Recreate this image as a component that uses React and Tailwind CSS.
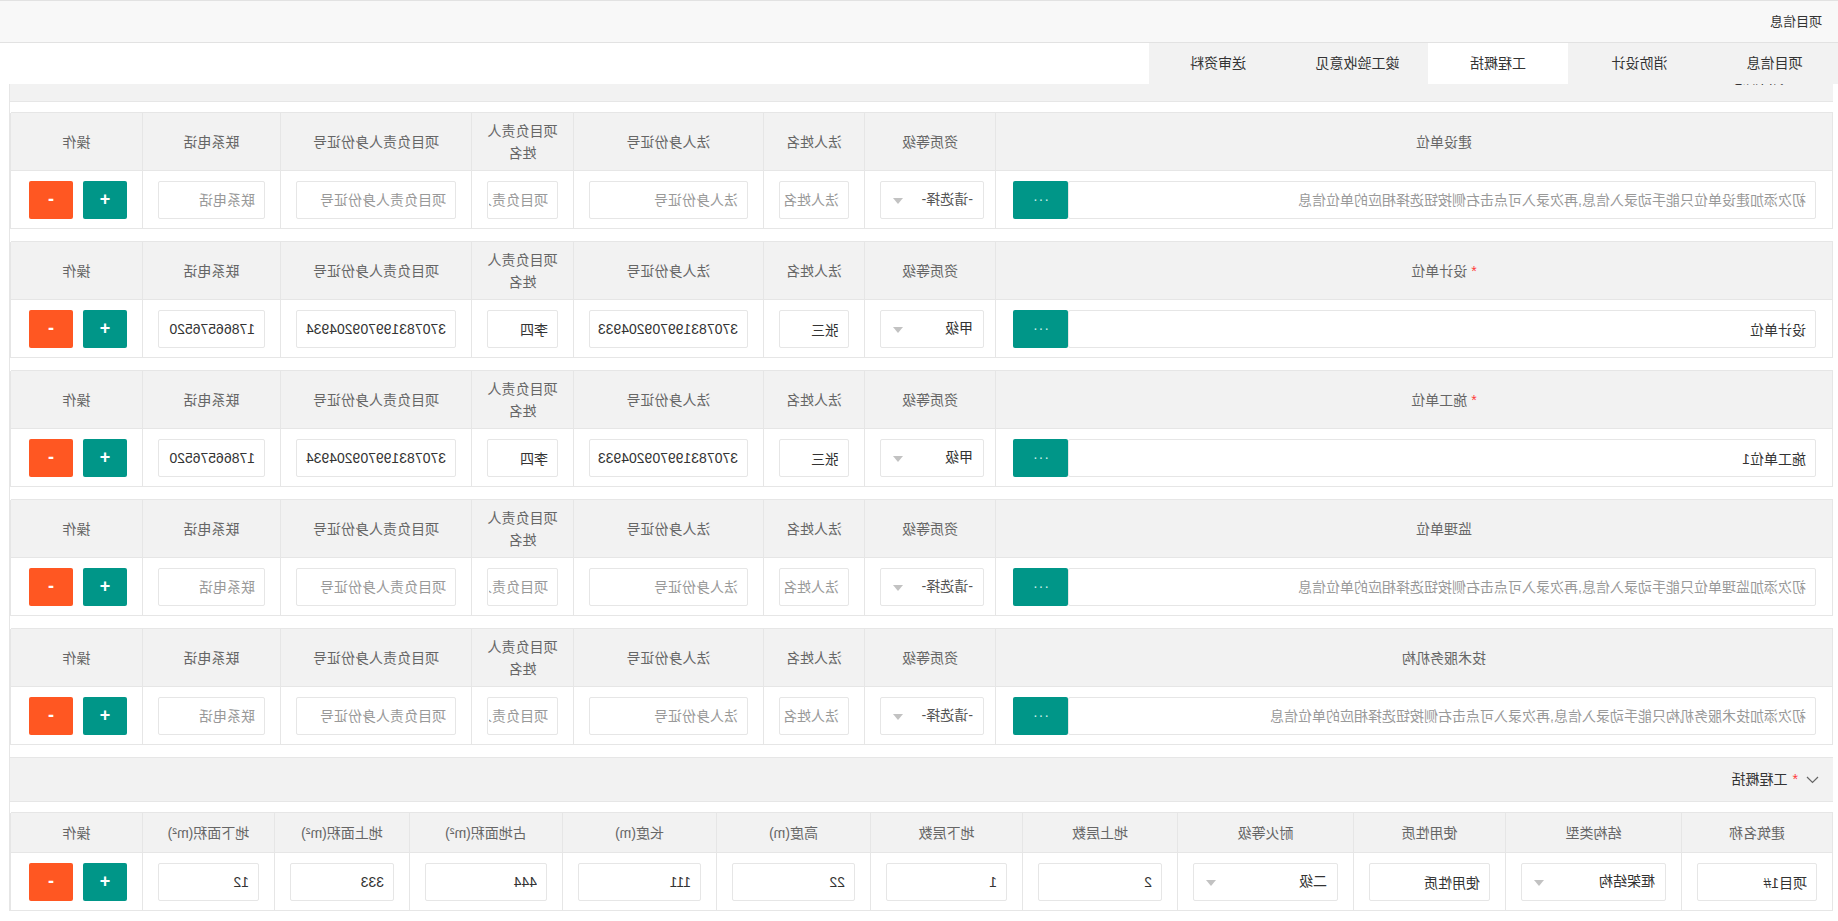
import React from "react";

const FONT = { fontFamily: '"Liberation Sans", "Noto Sans CJK SC", sans-serif' };

const tabs = [
  { name: "项目信息", w: "w-[127px]" },
  { name: "消防设计", w: "w-[143px]" },
  { name: "工程概括", w: "w-[140px]", active: true },
  { name: "竣工验收意见", w: "w-[141px]" },
  { name: "送审资料", w: "w-[138px]" },
];

const blocks = [
  { title: "建设单位", ph: "初次添加建设单位只能手动录入信息,再次录入可点击右侧按钮选择相应的单位信息" },
  {
    title: "设计单位", req: true, unit: "设计单位", grade: "甲级", name: "张三",
    id: "370783199709204933", pm: "李四", pmid: "370783199709204934", tel: "17866576520",
  },
  {
    title: "施工单位", req: true, unit: "施工单位1", grade: "甲级", name: "张三",
    id: "370783199709204933", pm: "李四", pmid: "370783199709204934", tel: "17866576520",
  },
  { title: "监理单位", ph: "初次添加监理单位只能手动录入信息,再次录入可点击右侧按钮选择相应的单位信息" },
  { title: "技术服务机构", ph: "初次添加技术服务机构只能手动录入信息,再次录入可点击右侧按钮选择相应的单位信息" },
];

const Inp = ({ value, ph }) => (
  <input
    readOnly
    defaultValue={value || ""}
    placeholder={ph}
    className="w-full min-w-0 h-[38px] border border-[#e6e6e6] rounded-[2px] bg-white pl-[9px] pr-[1px] text-[14px] text-[#333] placeholder:text-[#999] outline-none"
    style={FONT}
  />
);

const Sel = ({ value }) => (
  <div className="w-full h-[38px] border border-[#e6e6e6] rounded-[2px] bg-white flex items-center justify-between pl-[10px] pr-[12px] text-[14px]">
    <span className={value ? "text-[#333]" : "text-[#555]"}>{value || "-请选择-"}</span>
    <span className="w-0 h-0 border-t-[6px] border-x-[5px] border-t-[#c2c2c2] border-x-transparent mt-[2px]" />
  </div>
);

const Ops = () => (
  <div className="flex gap-[10px]">
    <div className="w-[44px] h-[38px] rounded-[2px] bg-[#009688] text-white flex items-center justify-center text-[18px] font-bold">+</div>
    <div className="w-[44px] h-[38px] rounded-[2px] bg-[#ff5722] text-white flex items-center justify-center text-[18px] font-bold">-</div>
  </div>
);

const th = "border-r border-b border-[#e6e6e6] bg-[#f2f2f2] flex items-center justify-center text-center text-[14px] leading-[22px] text-[#666] px-[15px]";
const td = "border-r border-b border-[#e6e6e6] bg-white flex items-center px-[15px]";

const UnitBlock = ({ b }) => (
  <div className="grid grid-cols-[837px_131px_101px_190px_102px_191px_138px_132px] border-l border-t border-[#e6e6e6] mb-[12px]">
    <div className={`${th} h-[58px] pr-[75px]`}>
      {b.req && <span className="text-[#ff3b3b] mr-[4px]">*</span>}
      {b.title}
    </div>
    <div className={th}>资质等级</div>
    <div className={th}>法人姓名</div>
    <div className={th}>法人身份证号</div>
    <div className={th}>项目负责人姓名</div>
    <div className={th}>项目负责人身份证号</div>
    <div className={th}>联系电话</div>
    <div className={th}>操作</div>

    <div className={`${td} h-[58px] pl-[16px] pr-[17px]`}>
      <Inp value={b.unit} ph={b.ph} />
      <div className="shrink-0 w-[55px] h-[38px] rounded-[2px] bg-[#009688] text-[#cfeeea] flex items-center justify-center text-[14px] tracking-[1px]">···</div>
    </div>
    <div className={`${td} pl-[11px]`}><Sel value={b.grade} /></div>
    <div className={td}><Inp value={b.name} ph="法人姓名" /></div>
    <div className={td}><Inp value={b.id} ph="法人身份证号" /></div>
    <div className={td}><Inp value={b.pm} ph="项目负责人姓名" /></div>
    <div className={td}><Inp value={b.pmid} ph="项目负责人身份证号" /></div>
    <div className={td}><Inp value={b.tel} ph="联系电话" /></div>
    <div className={td}><Ops /></div>
  </div>
);

const Chevron = () => (
  <svg width="13" height="8" viewBox="0 0 13 8" className="mr-[8px]">
    <polyline points="1,1 6.5,6.5 12,1" fill="none" stroke="#666" strokeWidth="1.2" />
  </svg>
);

const buildCols = ["建筑名称", "结构类型", "使用性质", "耐火等级", "地上层数", "地下层数", "高度(m)", "长度(m)", "占地面积(m²)", "地上面积(m²)", "地下面积(m²)", "操作"];

export default function App() {
  return (
    <div className="w-[1838px] h-[921px] overflow-hidden bg-white -scale-x-100 text-[#333]" style={FONT}>
      {/* title bar */}
      <div className="h-[43px] bg-[#f8f8f8] border-t border-b border-[#e2e2e2] flex items-center pl-[16px] text-[13px] text-[#333]">
        项目信息
      </div>
      {/* tabs */}
      <div className="h-[41px] flex">
        {tabs.map((t) => (
          <div
            key={t.name}
            className={`${t.w} h-full flex items-center justify-center text-[14px] text-[#333] ${t.active ? "bg-white" : "bg-[#f2f2f2]"}`}
          >
            {t.name}
          </div>
        ))}
        <div className="flex-1 bg-white" />
      </div>
      {/* content */}
      <div className="ml-[5px] w-[1824px] border-r border-[#e6e6e6]">
        <div className="h-[18px] overflow-hidden bg-[#f2f2f2] border-b border-[#e6e6e6]">
          <div className="-mt-[28px] h-[44px] flex items-center pl-[15px] text-[14px] text-[#333]">
            <Chevron />
            <span className="text-[#ff3b3b] mr-[4px]">*</span>项目信息
          </div>
        </div>
        <div className="pt-[10px] w-[1822px]">
          {blocks.map((b) => (
            <UnitBlock key={b.title} b={b} />
          ))}
        </div>
        <div className="h-[45px] bg-[#f2f2f2] border-t border-b border-[#e6e6e6] flex items-center pl-[14px] text-[14px] text-[#333]">
          <Chevron />
          <span className="text-[#ff3b3b] mr-[5px]">*</span>工程概括
        </div>
        <div className="pt-[10px] w-[1822px]">
          <div className="grid grid-cols-[151px_176px_152px_176px_155px_152px_154px_154px_153px_135px_132px_132px] border-l border-t border-[#e6e6e6]">
            {buildCols.map((c) => (
              <div key={c} className={`${th} h-[40px]`}>{c}</div>
            ))}
            <div className={`${td} h-[58px] px-[9px]`}><Inp value="项目1#" /></div>
            <div className={td}><Sel value="框架结构" /></div>
            <div className={td}><Inp value="使用性质" /></div>
            <div className={td}><Sel value="二级" /></div>
            <div className={td}><Inp value="2" /></div>
            <div className={td}><Inp value="1" /></div>
            <div className={td}><Inp value="22" /></div>
            <div className={td}><Inp value="111" /></div>
            <div className={td}><Inp value="444" /></div>
            <div className={td}><Inp value="333" /></div>
            <div className={td}><Inp value="12" /></div>
            <div className={td}><Ops /></div>
          </div>
        </div>
      </div>
    </div>
  );
}
